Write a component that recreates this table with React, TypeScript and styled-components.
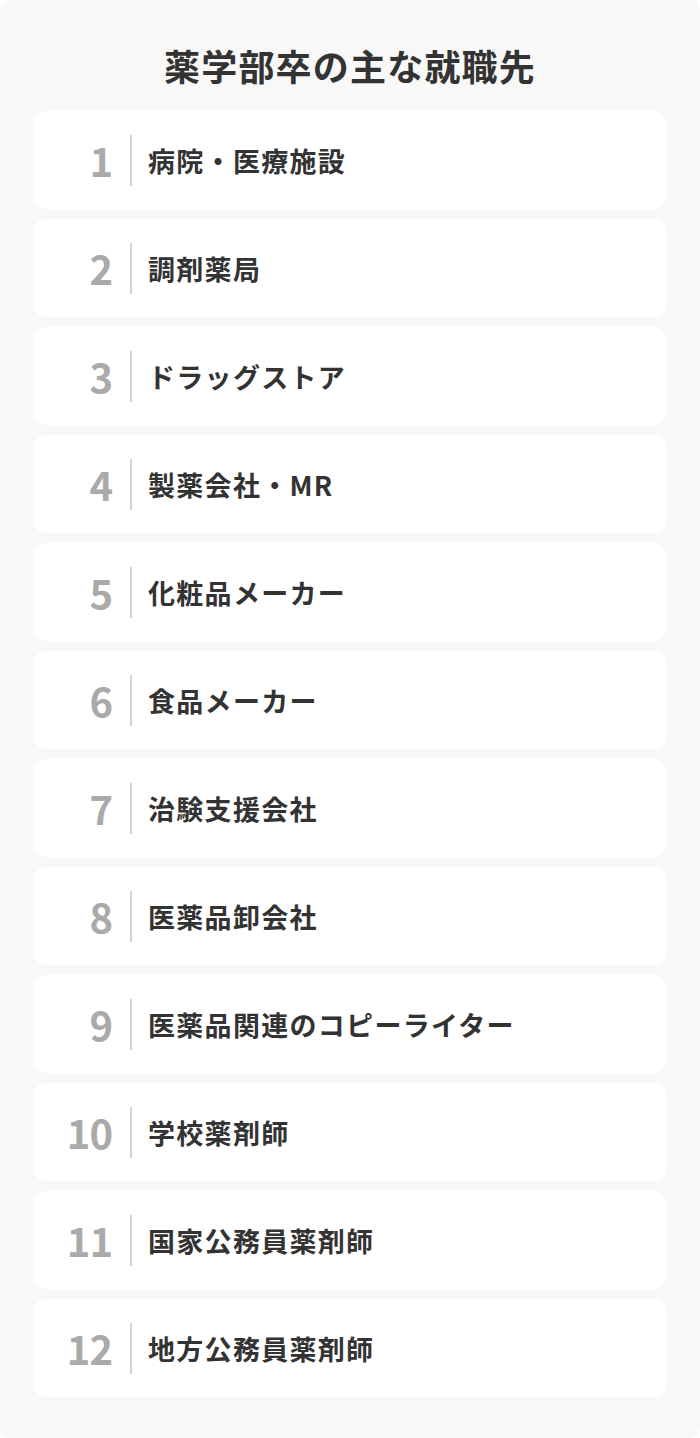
import React from 'react'
import styled, { createGlobalStyle } from 'styled-components'

const jobs = [
  '病院・医療施設',
  '調剤薬局',
  'ドラッグストア',
  '製薬会社・MR',
  '化粧品メーカー',
  '食品メーカー',
  '治験支援会社',
  '医薬品卸会社',
  '医薬品関連のコピーライター',
  '学校薬剤師',
  '国家公務員薬剤師',
  '地方公務員薬剤師',
]

const GlobalStyle = createGlobalStyle`
  html, body {
    margin: 0;
    padding: 0;
    background: #ffffff;
  }
  body {
    font-family: "Noto Sans CJK JP", "Noto Sans", sans-serif;
  }
`

const Panel = styled.section`
  width: 700px;
  min-height: 1438px;
  box-sizing: border-box;
  background: #f8f8f8;
  border-radius: 10px;
  padding: 40px 33px 41px;
`

const Title = styled.h2`
  margin: 0 0 21px;
  font-size: 36px;
  line-height: 50px;
  font-weight: 700;
  letter-spacing: 1.2px;
  color: #333333;
  text-align: center;
`

const List = styled.ol`
  list-style: none;
  margin: 0;
  padding: 0;
  display: flex;
  flex-direction: column;
  gap: 10px;
`

const Card = styled.li`
  height: 98px;
  display: flex;
  align-items: center;
  background: #ffffff;
  border-radius: 14px;
`

const Rank = styled.span`
  width: 60px;
  margin-left: 19px;
  text-align: right;
  font-size: 40px;
  font-weight: 700;
  line-height: 1;
  color: #aaaaaa;
  letter-spacing: -1px;
`

const Divider = styled.span`
  width: 2px;
  height: 51px;
  margin: 0 16px 0 18px;
  background: #d4d4d4;
`

const Name = styled.span`
  font-size: 27px;
  font-weight: 700;
  letter-spacing: 1.3px;
  color: #333333;
  line-height: 1;
`

const App: React.FC = () => (
  <>
    <GlobalStyle />
    <Panel>
      <Title>薬学部卒の主な就職先</Title>
      <List>
        {jobs.map((job, i) => (
          <Card key={job}>
            <Rank>{i + 1}</Rank>
            <Divider />
            <Name>{job}</Name>
          </Card>
        ))}
      </List>
    </Panel>
  </>
)

export default App
